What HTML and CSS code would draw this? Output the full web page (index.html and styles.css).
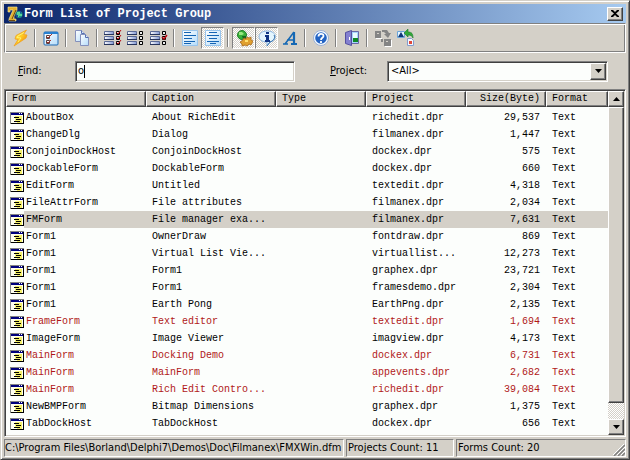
FILE: index.html
```html
<!DOCTYPE html>
<html lang="en">
<head>
<meta charset="utf-8">
<title>Form List of Project Group</title>
<link rel="stylesheet" href="styles.css">
</head>
<body>
<svg class="defs" aria-hidden="true">
  <defs>
    <linearGradient id="bar" x1="0" x2="1" y1="0" y2="0"><stop offset="0" stop-color="#fff"/><stop offset="1" stop-color="#8298d4"/></linearGradient>
    <linearGradient id="page" x1="0" x2="1" y1="0" y2="1"><stop offset="0" stop-color="#fff"/><stop offset="1" stop-color="#b4dcfa"/></linearGradient>
    <linearGradient id="bolt" x1="0" x2="1" y1="0" y2="1"><stop offset="0" stop-color="#fff04a"/><stop offset=".5" stop-color="#ffc820"/><stop offset="1" stop-color="#e86c08"/></linearGradient>
    <symbol id="form" viewBox="0 0 14 12">
      <path fill="#848484" d="M0 0h14v12H0z"/><path fill="#000" d="M1 12h13V1h-1v10H1z"/>
      <path fill="#fffff0" d="M1 1h12v10H1z"/><path fill="#f4f06a" d="M5 4h7v7H7V9H5z"/>
      <path fill="#00007c" d="M1 1h12v2H1z"/><path fill="#fff" d="M9 1h1v1H9zM11 1h1v1h-1z"/>
      <path fill="#000" d="M4 5h5v1H4zM6 7h5v1H6zM4 9h6v1H4z"/>
    </symbol>
    <symbol id="bars" viewBox="0 0 18 18">
      <g fill="url(#bar)" stroke="#5b6a96"><path d="M.5 2.500h9v3h-9zM.5 7.500h9v3h-9zM.5 12.500h9v3h-9z"/></g>
      <path fill="none" stroke="#26345c" d="M0 5.500h10M0 10.500h10M0 15.500h10"/>
      <path fill="#eee" stroke="#000" d="M12.500 2.500h3v3h-3zM12.500 7.500h3v3h-3zM12.500 12.500h3v3h-3z"/>
    </symbol>
  </defs>
</svg>
<main class="window">
  <header class="titlebar">
    <svg class="logo" viewBox="0 0 16 16" aria-hidden="true">
      <path fill="#e0b030" stroke="#fff0a0" stroke-width=".6" d="M1 1h9v3L7 10v3h2v2H2v-2l4-9H3v2H1z"/>
      <path fill="none" stroke="#6c4810" d="M9 4 5 13M2 14.500h6"/>
      <circle cx="12" cy="8.500" r="3.500" fill="#188c88"/><path fill="#58d498" d="M10 6h3v2h2v2h-3v1h-2z"/><path fill="#185098" d="M13 5h1v2h-1zM9 9h2v2H9z"/>
    </svg>
    <h1>Form List of Project Group</h1>
    <button class="close raised" aria-label="Close"><svg viewBox="0 0 8 7"><path d="M0 0h2l2 2 2-2h2v1L5 3.500 8 6v1H6L4 5 2 7H0V6l3-2.500L0 1z"/></svg></button>
  </header>

  <div class="toolbar" role="toolbar" aria-label="Form list">
    <button aria-label="Open form"><svg viewBox="0 0 18 18"><path fill="url(#bolt)" stroke="#f0a020" stroke-width=".8" d="M15.500 1 5 6.500 4 10l3 .5L3 17 15 9l1-3-3.500-.5z"/><path fill="none" stroke="#fff270" d="M13 3.500 7 7l-1 1.500 4 .5-3 4"/></svg></button>
    <i class="sep"></i>
    <button aria-label="Properties"><svg viewBox="0 0 18 18"><rect x="2" y="3" width="14" height="13" rx="1" fill="url(#page)" stroke="#1c68b4"/><path fill="#2880d0" d="M2 3h14v2H2z"/><path fill="#fff" stroke="#584040" d="M4.500 6.500h3v3h-3zM4.500 11.500h3v3h-3z"/><path fill="none" stroke="#a83028" d="m5 8 1 1 4-4M5 13l1 1 3-3"/></svg></button>
    <i class="sep"></i>
    <button aria-label="Copy"><svg viewBox="0 0 18 18"><g fill="url(#page)" stroke="#8490bc"><path d="M2.500 1.500h6l3 3v8h-9z"/><path d="M7.500 5.500h5l3 3v8h-8z"/></g><path fill="#dceafa" stroke="#5870b0" d="M8.500 1.500v3h3M12.500 5.500v3h3"/></svg></button>
    <i class="sep"></i>
    <button aria-label="Select all"><svg viewBox="0 0 18 18"><use href="#bars"/><path fill="none" stroke="#b80810" d="m12.500 3.500 1.500 1.500 3-4M12.500 8.500 14 10l3-4M12.500 13.500 14 15l3-4"/></svg></button>
    <button aria-label="Select none"><svg viewBox="0 0 18 18"><use href="#bars"/></svg></button>
    <button aria-label="Invert selection"><svg viewBox="0 0 18 18"><use href="#bars"/><path fill="none" stroke="#b80810" stroke-width="1.500" d="m12 8 2 2 3-4"/></svg></button>
    <i class="sep"></i>
    <button aria-label="Match from start"><svg viewBox="0 0 18 18"><path fill="url(#page)" stroke="#98c4ec" d="M1.500 1.500h15v15h-15z"/><path stroke="#1464b4" d="M3 3.500h7M3 6.500h12M3 9.500h8M3 12.500h11M3 14.500h7"/></svg></button>
    <button class="pressed" aria-pressed="true" aria-label="Match anywhere"><svg viewBox="0 0 18 18"><path fill="url(#page)" stroke="#98c4ec" d="M1.500 1.500h15v15h-15z"/><path stroke="#1464b4" d="M5 3.500h8M3 6.500h12M5 9.500h8M3 12.500h12M6 14.500h6"/></svg></button>
    <i class="sep"></i>
    <button class="pressed" aria-pressed="true" aria-label="Hook IDE"><svg viewBox="0 0 18 18"><circle cx="7" cy="6" r="4.500" fill="#38b038" stroke="#208028"/><path fill="#98e880" d="M4 3h3l2 2-2 1H4z"/><path fill="#146820" d="M7 7h4v3H8z"/><path fill="#e0a030" stroke="#a86818" stroke-width=".8" d="m9 9 2 1 1-2 2 1 2-1v3l2 1-1 2-1 2-2-1-2 2-2-1-3 1v-2l-2-2 2-1z"/><path fill="#ffe070" d="M10 11h3v2h-3z"/></svg></button>
    <button class="pressed" aria-pressed="true" aria-label="Show hints"><svg viewBox="0 0 18 18"><path fill="#e4f6ff" stroke="#88b4e0" d="M9 2c11 0 10 10 3 11l-3 4v-4C-2 13-1 2 9 2z"/><path fill="none" stroke="#3870a8" d="M16 6c2 3-1 6-4 7l-3 4"/><path fill="#103484" d="M8 3h3v2H8zM7 6h4v5h1v2H7v-2h1V8H7z"/></svg></button>
    <button aria-label="Font"><svg viewBox="0 0 18 18"><path fill="none" stroke="#1468b4" stroke-width="1.500" d="M2 15h5M4 15 13 3M6 11h7"/><path fill="none" stroke="#1468b4" stroke-width="2.200" d="M13 3v12M10 15h6"/></svg></button>
    <i class="sep"></i>
    <button aria-label="Help"><svg viewBox="0 0 18 18"><circle cx="9" cy="9" r="7.500" fill="#f4faff" stroke="#9cb0d4"/><circle cx="9" cy="9" r="5.800" fill="#2464c4"/><path fill="none" stroke="#fff" stroke-width="1.800" d="M6.500 7.500C6.500 4 11.500 4 11.500 7 11.500 9 9 8.500 9 11M9 12v2"/></svg></button>
    <i class="sep"></i>
    <button aria-label="Exit"><svg viewBox="0 0 18 18"><path fill="#a8d4fc" stroke="#6868a8" d="M7.500 2.500h8v12h-8z"/><path fill="#e8fcff" d="M10 4h4v5h-4z"/><path fill="#108828" d="M10 9h5v4h-5z"/><path fill="#8480d0" stroke="#5450a0" d="m2.500 3.500 6-2v15l-6-2z"/><path fill="#fff" d="M6 8h1v3H6z"/></svg></button>
    <i class="sep"></i>
    <button disabled aria-label="Convert to text"><svg viewBox="0 0 18 18"><path fill="#fff" d="M2 9h6v1H2zM11 17h7v1h-7zM17 11h1v7h-1z"/><path fill="#848484" d="M1 2h6v7H1zM10 10h7v7h-7zM8 1h5l2 3h2l-3 5-4-4h2l-2-2H8zM7 10h2v3H7z"/><path fill="#d4d0c8" d="M3 4h2v1H3zM12 12h2v1h-2z"/></svg></button>
    <button aria-label="Convert to binary"><svg viewBox="0 0 18 18"><path fill="#e4f4ff" stroke="#6ca4d8" d="M.5 2.500h7v6h-7z"/><path fill="#103878" d="M1 8h6L4 3z"/><path fill="#f4f8ff" stroke="#849ccc" d="M10.500 9.500h4l2 2v5h-6z"/><path fill="#e04838" d="M12 12h3v3h-3z"/><path fill="#30a838" stroke="#187828" stroke-width=".6" d="m7 4 4-4v3c4 0 5 2 5 6-1-2-2-3-5-3v2z"/></svg></button>
  </div>

  <form class="filter">
    <label class="find-label" for="find"><u>F</u>ind:</label>
    <div class="find sunken"><input id="find" type="text" value="o"><span class="caret"></span></div>
    <label class="project-label" for="project"><u>P</u>roject:</label>
    <div class="project sunken">
      <select id="project"><option>&lt;All&gt;</option></select>
      <span class="drop raised"><svg class="arrow" viewBox="0 0 7 4"><path d="M0 0h7L3.500 4z"/></svg></span>
    </div>
  </form>

  <section class="list">
    <div class="view">
      <table>
        <colgroup><col class="c-form"><col class="c-caption"><col class="c-type"><col class="c-project"><col class="c-size"><col class="c-format"></colgroup>
        <thead><tr><th>Form</th><th>Caption</th><th>Type</th><th>Project</th><th class="num">Size(Byte)</th><th>Format</th></tr></thead>
        <tbody>
          <tr><td><svg><use href="#form"/></svg><span>AboutBox</span></td><td>About RichEdit</td><td></td><td>richedit.dpr</td><td class="num">29,537</td><td>Text</td></tr>
          <tr><td><svg><use href="#form"/></svg><span>ChangeDlg</span></td><td>Dialog</td><td></td><td>filmanex.dpr</td><td class="num">1,447</td><td>Text</td></tr>
          <tr><td><svg><use href="#form"/></svg><span>ConjoinDockHost</span></td><td>ConjoinDockHost</td><td></td><td>dockex.dpr</td><td class="num">575</td><td>Text</td></tr>
          <tr><td><svg><use href="#form"/></svg><span>DockableForm</span></td><td>DockableForm</td><td></td><td>dockex.dpr</td><td class="num">660</td><td>Text</td></tr>
          <tr><td><svg><use href="#form"/></svg><span>EditForm</span></td><td>Untitled</td><td></td><td>textedit.dpr</td><td class="num">4,318</td><td>Text</td></tr>
          <tr><td><svg><use href="#form"/></svg><span>FileAttrForm</span></td><td>File attributes</td><td></td><td>filmanex.dpr</td><td class="num">2,034</td><td>Text</td></tr>
          <tr class="selected"><td><svg><use href="#form"/></svg><span>FMForm</span></td><td>File manager exa...</td><td></td><td>filmanex.dpr</td><td class="num">7,631</td><td>Text</td></tr>
          <tr><td><svg><use href="#form"/></svg><span>Form1</span></td><td>OwnerDraw</td><td></td><td>fontdraw.dpr</td><td class="num">869</td><td>Text</td></tr>
          <tr><td><svg><use href="#form"/></svg><span>Form1</span></td><td>Virtual List Vie...</td><td></td><td>virtuallist...</td><td class="num">12,273</td><td>Text</td></tr>
          <tr><td><svg><use href="#form"/></svg><span>Form1</span></td><td>Form1</td><td></td><td>graphex.dpr</td><td class="num">23,721</td><td>Text</td></tr>
          <tr><td><svg><use href="#form"/></svg><span>Form1</span></td><td>Form1</td><td></td><td>framesdemo.dpr</td><td class="num">2,304</td><td>Text</td></tr>
          <tr><td><svg><use href="#form"/></svg><span>Form1</span></td><td>Earth Pong</td><td></td><td>EarthPng.dpr</td><td class="num">2,135</td><td>Text</td></tr>
          <tr class="open"><td><svg><use href="#form"/></svg><span>FrameForm</span></td><td>Text editor</td><td></td><td>textedit.dpr</td><td class="num">1,694</td><td>Text</td></tr>
          <tr><td><svg><use href="#form"/></svg><span>ImageForm</span></td><td>Image Viewer</td><td></td><td>imagview.dpr</td><td class="num">4,173</td><td>Text</td></tr>
          <tr class="open"><td><svg><use href="#form"/></svg><span>MainForm</span></td><td>Docking Demo</td><td></td><td>dockex.dpr</td><td class="num">6,731</td><td>Text</td></tr>
          <tr class="open"><td><svg><use href="#form"/></svg><span>MainForm</span></td><td>MainForm</td><td></td><td>appevents.dpr</td><td class="num">2,682</td><td>Text</td></tr>
          <tr class="open"><td><svg><use href="#form"/></svg><span>MainForm</span></td><td>Rich Edit Contro...</td><td></td><td>richedit.dpr</td><td class="num">39,084</td><td>Text</td></tr>
          <tr><td><svg><use href="#form"/></svg><span>NewBMPForm</span></td><td>Bitmap Dimensions</td><td></td><td>graphex.dpr</td><td class="num">1,375</td><td>Text</td></tr>
          <tr><td><svg><use href="#form"/></svg><span>TabDockHost</span></td><td>TabDockHost</td><td></td><td>dockex.dpr</td><td class="num">656</td><td>Text</td></tr>
        </tbody>
      </table>
    </div>
    <div class="scrollbar">
      <button class="raised" aria-label="Scroll up"><svg class="arrow" viewBox="0 0 7 4"><path d="M0 4h7L3.500 0z"/></svg></button>
      <div class="thumb raised"></div>
      <div class="track"></div>
      <button class="raised" aria-label="Scroll down"><svg class="arrow" viewBox="0 0 7 4"><path d="M0 0h7L3.500 4z"/></svg></button>
    </div>
  </section>

  <footer class="status">
    <div class="path">C:\Program Files\Borland\Delphi7\Demos\Doc\Filmanex\FMXWin.dfm</div>
    <div class="projects">Projects Count: 11</div>
    <div class="forms">Forms Count: 20<svg viewBox="0 0 12 12" aria-hidden="true"><path stroke="#808080" stroke-width="1.500" d="M1 12 12 1M5 12l7-7M9 12l3-3"/><path stroke="#fff" d="M0 11 11 0M4 11l8-8M8 11l4-4"/></svg></div>
  </footer>
</main>
</body>
</html>
```
FILE: styles.css
```css
* { box-sizing: border-box; }

body {
  margin: 0;
  background: #d4d0c8;
  color: #000;
  font: 11px/14px "DejaVu Sans Condensed", "Liberation Sans", sans-serif;
}

button, input, select { font: inherit; color: inherit; margin: 0; padding: 0; border: 0; border-radius: 0; }
button svg { display: block; }
.defs { position: absolute; width: 0; height: 0; }

.window {
  display: flex;
  flex-direction: column;
  min-height: 100vh;
  padding: 3px 3px 2px;
  border: 1px solid #d4d0c8;
  border-right-color: #404040;
  border-bottom-color: #404040;
  box-shadow: inset 1px 1px #fff, inset -1px -1px #808080;
}

.raised {
  background: #d4d0c8;
  border: 1px solid;
  border-color: #fff #404040 #404040 #fff;
  box-shadow: inset -1px -1px #808080;
  display: flex;
  align-items: center;
  justify-content: center;
}

.sunken {
  display: flex;
  background: #fcfefc;
  border: 1px solid;
  border-color: #808080 #fff #fff #808080;
  box-shadow: inset 1px 1px #404040, inset -1px -1px #d4d0c8;
  padding: 2px;
}

.arrow { width: 7px; height: 4px; }

.titlebar {
  display: flex;
  align-items: center;
  gap: 1px;
  height: 19px;
  padding: 0 3px;
  background: linear-gradient(90deg, #0a246a, #a6caf0);
}
.logo { width: 16px; height: 16px; }
.titlebar h1 { flex: 1; margin: 0; color: #fff; font: bold 12px/16px "Liberation Mono", monospace; }
.close { width: 16px; height: 14px; }
.close svg { width: 8px; height: 7px; }

.toolbar {
  display: flex;
  align-items: center;
  height: 30px;
  padding: 0 3px;
  border: 1px solid;
  border-color: #808080 #fff #fff #808080;
  box-shadow: inset 1px 1px #fff, inset -1px -1px #808080;
}
.toolbar button {
  display: flex;
  align-items: center;
  justify-content: center;
  width: 23px;
  height: 22px;
  background: none;
}
.toolbar button svg { width: 18px; height: 18px; }
.toolbar .pressed {
  border: 1px solid;
  border-color: #808080 #fff #fff #808080;
  background: repeating-conic-gradient(#fff 0 25%, #d4d0c8 0 50%) 0 0 / 2px 2px;
}
.sep { width: 2px; height: 18px; margin: 0 3px; border-left: 1px solid #808080; border-right: 1px solid #fff; }

.filter { display: flex; align-items: center; height: 36px; padding: 0 18px 0 14px; }
.find-label { width: 57px; }
.find { width: 220px; height: 21px; align-items: center; }
.find input { field-sizing: content; min-width: 6px; background: transparent; outline: 0; }
.caret { width: 1px; height: 13px; background: #000; }
.project-label { width: 57px; margin-left: 35px; }
.project { position: relative; flex: 1; height: 21px; }
.project select { appearance: none; flex: 1; padding-left: 1px; background: transparent; outline: 0; }
.drop { position: absolute; top: 1px; right: 1px; bottom: 1px; width: 16px; pointer-events: none; }

.list {
  display: flex;
  flex: 1;
  padding: 1px;
  background: #fcfefc;
  border: 1px solid;
  border-color: #808080 #fff #fff #808080;
  box-shadow: inset 1px 1px #404040, inset -1px -1px #d4d0c8;
}
.view { flex: 1; }
table {
  width: 100%;
  table-layout: fixed;
  border-collapse: separate;
  border-spacing: 0;
  font: 10px/17px "Liberation Mono", monospace;
}
.c-caption { width: 130px; }
.c-type { width: 90px; }
.c-project { width: 100px; }
.c-size { width: 80px; }
.c-format { width: 62px; }
th, td { padding: 0 6px; text-align: left; font-weight: normal; white-space: nowrap; }
th {
  height: 16px;
  line-height: 14px;
  background: #d4d0c8;
  border: 1px solid;
  border-color: #fff #404040 #404040 #fff;
  box-shadow: inset -1px -1px #808080;
  padding: 0 5px;
}
.num { text-align: right; }
td { height: 17px; }
tbody::before { content: ""; display: block; height: 2px; }
td:first-child { display: flex; align-items: center; padding: 0 0 0 4px; }
td svg { width: 14px; height: 12px; }
td span { flex: 1; padding-left: 2px; height: 17px; }
.selected td:not(:first-child), .selected span { background: #d4d0c8; }
.open { color: #b01818; }

.scrollbar { display: flex; flex-direction: column; width: 16px; }
.scrollbar button { height: 16px; }
.thumb { flex: 18; }
.track { flex: 1; background: repeating-conic-gradient(#fff 0 25%, #d4d0c8 0 50%) 0 0 / 2px 2px; }

.status { display: flex; gap: 2px; margin-top: 2px; height: 18px; line-height: 16px; white-space: nowrap; }
.status div { border: 1px solid; border-color: #808080 #fff #fff #808080; }
.path { width: 340px; }
.projects { width: 108px; padding-left: 1px; }
.forms { flex: 1; display: flex; justify-content: space-between; align-items: flex-end; padding-left: 1px; }
.forms svg { width: 12px; height: 12px; }
```
